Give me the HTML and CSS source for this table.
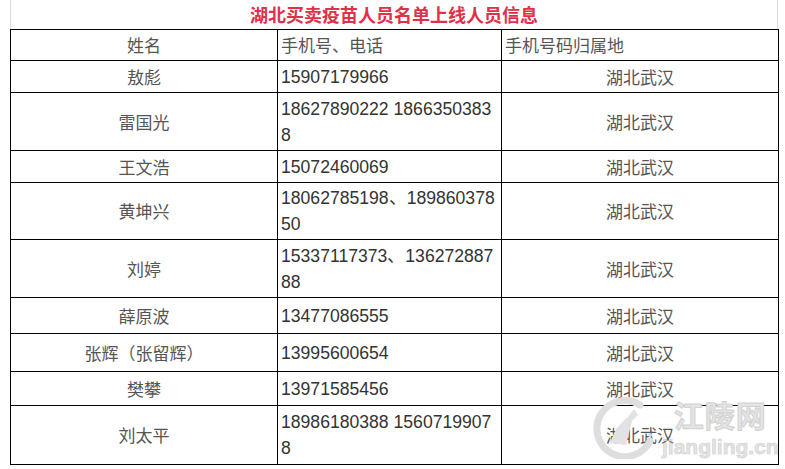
FILE: index.html
```html
<!DOCTYPE html>
<html lang="zh-CN">
<head>
<meta charset="utf-8">
<title>湖北买卖疫苗人员名单上线人员信息</title>
<link rel="stylesheet" href="styles.css">
</head>
<body>
<div class="page">
  <div class="title">湖北买卖疫苗人员名单上线人员信息</div>
  <table class="list">
    <colgroup>
      <col class="c1"><col class="c2"><col class="c3">
    </colgroup>
    <tr class="h31">
      <td class="ctr">姓名</td>
      <td>手机号、电话</td>
      <td>手机号码归属地</td>
    </tr>
    <tr class="h32"><td class="ctr">敖彪</td><td class="num">15907179966</td><td class="ctr">湖北武汉</td></tr>
    <tr class="h58"><td class="ctr">雷国光</td><td class="num">18627890222 18663503838</td><td class="ctr">湖北武汉</td></tr>
    <tr class="h32"><td class="ctr">王文浩</td><td class="num">15072460069</td><td class="ctr">湖北武汉</td></tr>
    <tr class="h57"><td class="ctr">黄坤兴</td><td class="num">18062785198、18986037850</td><td class="ctr">湖北武汉</td></tr>
    <tr class="h58"><td class="ctr">刘婷</td><td class="num">15337117373、13627288788</td><td class="ctr">湖北武汉</td></tr>
    <tr class="h36"><td class="ctr">薛原波</td><td class="num">13477086555</td><td class="ctr">湖北武汉</td></tr>
    <tr class="h38"><td class="ctr">张辉（张留辉）</td><td class="num">13995600654</td><td class="ctr">湖北武汉</td></tr>
    <tr class="h34"><td class="ctr">樊攀</td><td class="num">13971585456</td><td class="ctr">湖北武汉</td></tr>
    <tr class="h59"><td class="ctr">刘太平</td><td class="num">18986180388 15607199078</td><td class="ctr">湖北武汉</td></tr>
  </table>
  <div class="mark">
    <svg class="mark-logo" width="72" height="64" viewBox="0 0 72 64">
      <path d="M52 10 A28 28 0 1 0 62 46" fill="none" stroke="#dedede" stroke-width="7" stroke-linecap="round"/>
      <path d="M22 48 C26 36 32 28 40 22 L46 14 L50 20 L44 26 C42 34 40 42 38 50 Z" fill="#e2e2e2"/>
      <circle cx="62" cy="40" r="2" fill="#d8d8d8"/>
    </svg>
    <div class="mark-text">
      <div class="mark-cn">江陵网</div>
      <div class="mark-en">jiangling.cn</div>
    </div>
  </div>
</div>
</body>
</html>
```

FILE: styles.css
```css
html, body {
  margin: 0;
  padding: 0;
  background: #ffffff;
}
.page {
  position: relative;
  width: 785px;
  height: 469px;
  overflow: hidden;
}
.title {
  margin-left: 10px;
  width: 768px;
  height: 30px;
  box-sizing: border-box;
  border-left: 1px solid #dcdcdc;
  border-right: 1px solid #dcdcdc;
  border-bottom: 1px solid #dcdcdc;
  text-align: center;
  font-family: "Noto Sans CJK SC", sans-serif;
  font-weight: bold;
  font-size: 18px;
  line-height: 28px;
  color: #e0304a;
}
.list {
  margin-left: 10px;
  margin-top: -1px;
  border-collapse: collapse;
  table-layout: fixed;
  width: 769px;
  font-family: "Liberation Sans", "Noto Sans CJK SC", sans-serif;
  font-size: 17.6px;
  color: #3a3a3a;
}
.c1 { width: 267px; }
.c2 { width: 224px; }
.c3 { width: 277px; }
.list td {
  border: 1px solid #000;
  padding: 0 3px;
  line-height: 26px;
  vertical-align: middle;
  text-align: left;
  font-family: "Noto Sans CJK SC", sans-serif;
  font-size: 17px;
  color: #555555;
  word-break: break-all;
}
.list td.num {
  font-family: "Liberation Sans", sans-serif;
  font-size: 17.6px;
  color: #333333;
}
.list td.ctr { text-align: center; }
.h31 { height: 31px; }
.h32 { height: 32px; }
.h34 { height: 34px; }
.h36 { height: 36px; }
.h38 { height: 38px; }
.h57 { height: 57px; }
.h58 { height: 58px; }
.h59 { height: 59px; }
.mark {
  position: absolute;
  left: 588px;
  top: 394px;
  display: flex;
  align-items: center;
  gap: 2px;
}
.mark-text {
  display: flex;
  flex-direction: column;
  align-items: center;
}
.mark-cn {
  font-family: "Noto Sans CJK SC", sans-serif;
  font-weight: bold;
  font-size: 30px;
  line-height: 40px;
  color: #e4e4e4;
  letter-spacing: 1px;
  -webkit-text-stroke: 1px #d2d2d2;
}
.mark-en {
  font-family: "Liberation Sans", sans-serif;
  font-weight: bold;
  font-size: 21px;
  line-height: 26px;
  color: #e4e4e4;
  -webkit-text-stroke: 0.6px #cfcfcf;
}
```
